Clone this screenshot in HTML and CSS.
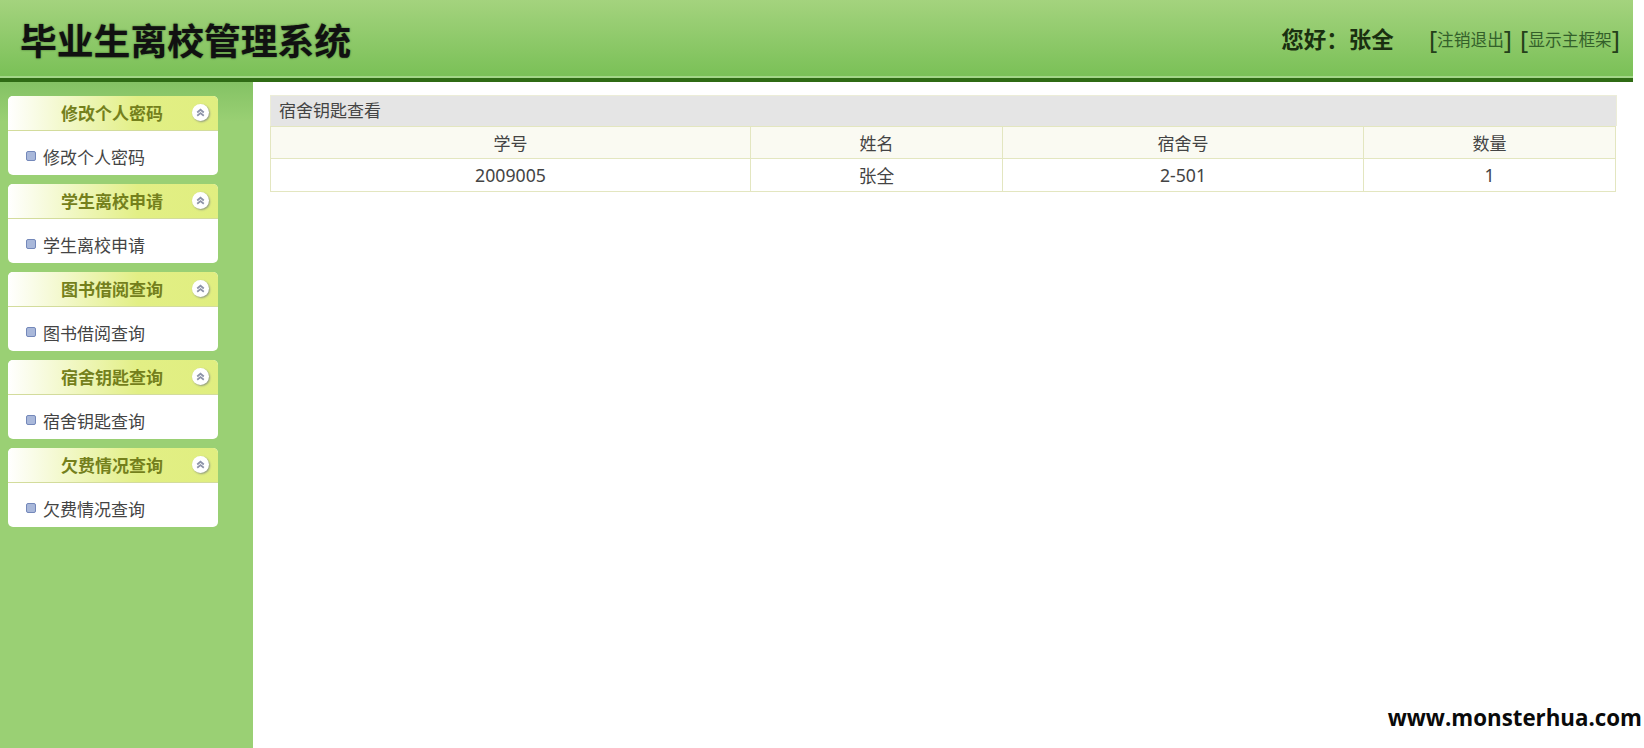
FILE: index.html

```html
<!DOCTYPE html>
<html lang="zh-CN">
<head>
  <meta charset="UTF-8">
  <title>毕业生离校管理系统</title>
  <link rel="stylesheet" href="styles.css">
</head>
<body>

<div class="header">
  <h1>毕业生离校管理系统</h1>
  <div class="user-bar">
    <span class="hello">您好：张全</span>
    <span class="links">
      <a href="#"><b>[</b>注销退出<b>]</b></a>
      <a href="#"><b>[</b>显示主框架<b>]</b></a>
    </span>
  </div>
</div>

<div class="main">
  <div class="sidebar">
    <div class="panel">
      <div class="panel-title"><span>修改个人密码</span><i class="collapse"><svg viewBox="0 0 10 10"><path d="M2 5 5 2.500 8 5M2 8 5 5.500 8 8"/></svg></i></div>
      <div class="panel-body"><i class="dot"></i>修改个人密码</div>
    </div>
    <div class="panel">
      <div class="panel-title"><span>学生离校申请</span><i class="collapse"><svg viewBox="0 0 10 10"><path d="M2 5 5 2.500 8 5M2 8 5 5.500 8 8"/></svg></i></div>
      <div class="panel-body"><i class="dot"></i>学生离校申请</div>
    </div>
    <div class="panel">
      <div class="panel-title"><span>图书借阅查询</span><i class="collapse"><svg viewBox="0 0 10 10"><path d="M2 5 5 2.500 8 5M2 8 5 5.500 8 8"/></svg></i></div>
      <div class="panel-body"><i class="dot"></i>图书借阅查询</div>
    </div>
    <div class="panel">
      <div class="panel-title"><span>宿舍钥匙查询</span><i class="collapse"><svg viewBox="0 0 10 10"><path d="M2 5 5 2.500 8 5M2 8 5 5.500 8 8"/></svg></i></div>
      <div class="panel-body"><i class="dot"></i>宿舍钥匙查询</div>
    </div>
    <div class="panel">
      <div class="panel-title"><span>欠费情况查询</span><i class="collapse"><svg viewBox="0 0 10 10"><path d="M2 5 5 2.500 8 5M2 8 5 5.500 8 8"/></svg></i></div>
      <div class="panel-body"><i class="dot"></i>欠费情况查询</div>
    </div>
  </div>

  <div class="content">
    <div class="grid-title">宿舍钥匙查看</div>
    <table class="grid">
      <tr>
        <th class="col-id">学号</th>
        <th class="col-name">姓名</th>
        <th class="col-room">宿舍号</th>
        <th>数量</th>
      </tr>
      <tr>
        <td>2009005</td>
        <td>张全</td>
        <td>2-501</td>
        <td>1</td>
      </tr>
    </table>
  </div>
</div>

<div class="watermark">www.monsterhua.com</div>

</body>
</html>
```

FILE: styles.css

```css
html, body {
  height: 100%;
}
body {
  margin: 0;
  height: 748px;
  overflow: hidden;
  display: flex;
  flex-direction: column;
  background-color: #fff;
  font-family: "Noto Sans", "Noto Sans CJK SC", sans-serif;
  color: #444;
}
.header {
  width: 1633px;
  height: 78px;
  flex-shrink: 0;
  display: flex;
  align-items: center;
  justify-content: space-between;
  background: linear-gradient(#a4d37e, #79c056);
  border-bottom: 4px solid #2f6b14;
  box-shadow: inset 0 -2px 0 #a3d688;
}
.header h1 {
  margin: 0 0 0 20px;
  font-size: 36.800px;
  line-height: 44px;
  font-weight: 700;
  color: #111;
  font-family: "Noto Sans CJK SC", sans-serif;
  text-shadow: 0 0 2px rgba(0,40,0,0.6);
}
.user-bar {
  display: flex;
  align-items: center;
  padding-right: 13px;
}
.hello {
  font-size: 22.500px;
  font-weight: 700;
  line-height: 28px;
  margin-bottom: 2px;
  color: #1a3010;
  font-family: "Noto Sans CJK SC", sans-serif;
  margin-right: 35px;
}
.links {
  display: flex;
  gap: 8px;
}
.links a {
  display: flex;
  align-items: center;
  color: #33602a;
  font-size: 16.700px;
  text-decoration: none;
}
.links b {
  font-size: 25px;
  font-weight: 400;
  color: #24401a;
  line-height: 26px;
}
.main {
  flex: 1;
  display: flex;
}
.sidebar {
  width: 253px;
  flex-shrink: 0;
  box-sizing: border-box;
  padding: 14px 35px 0 8px;
  background: linear-gradient(#84c264 0, #9ad074 40px);
}
.panel {
  margin-bottom: 9px;
  border-radius: 5px;
  overflow: hidden;
  background-color: #fff;
}
.panel-title {
  height: 34px;
  display: flex;
  align-items: center;
  justify-content: space-between;
  padding-right: 9px;
  border-bottom: 1px solid #d3dc9c;
  background: linear-gradient(90deg, #fff 0, #e2ef85 62%, #e0ee80 100%);
  color: #74801c;
  font-size: 17px;
  font-weight: 700;
}
.panel-title span {
  margin: 0 0 2px 53px;
}
.collapse {
  width: 17px;
  height: 17px;
  margin-bottom: 2px;
  display: flex;
  align-items: center;
  justify-content: center;
  border-radius: 50%;
  background-color: #fff;
  box-shadow: 1px 1px 2px #8f9a80;
}
.collapse svg {
  width: 11px;
  height: 11px;
  fill: none;
  stroke: #8d93a8;
  stroke-width: 1.6;
}
.panel-body {
  height: 44px;
  box-sizing: border-box;
  padding: 6px 0 0 18px;
  display: flex;
  align-items: center;
  font-size: 17px;
  color: #444;
}
.dot {
  width: 8px;
  height: 8px;
  margin-right: 7px;
  border: 1px solid #7488ba;
  border-radius: 2px;
  background-color: #a9b8da;
}
.content {
  flex: 1;
  padding: 13px 0 0 17px;
}
.grid-title {
  width: 1337px;
  height: 30px;
  line-height: 30px;
  padding-left: 8px;
  background-color: #e5e5e5;
  border: 1px solid #ecedd8;
  border-bottom: none;
  font-size: 17px;
  color: #444;
}
.grid {
  width: 1346px;
  border-collapse: collapse;
  table-layout: fixed;
  font-size: 17px;
  color: #444;
}
.grid th, .grid td {
  border: 1px solid #e3e6c0;
  text-align: center;
  font-weight: 400;
  padding: 0;
}
.grid th {
  height: 31px;
  background-color: #fafaf2;
}
.grid td {
  height: 32px;
  font-size: 17.700px;
}
.col-id {
  width: 479px;
}
.col-name {
  width: 251px;
}
.col-room {
  width: 360px;
}
.watermark {
  position: absolute;
  right: 2px;
  bottom: 16px;
  font-family: "Open Sans", sans-serif;
  font-size: 22.300px;
  font-weight: 700;
  line-height: 28px;
  color: #0a0a0a;
}
```
